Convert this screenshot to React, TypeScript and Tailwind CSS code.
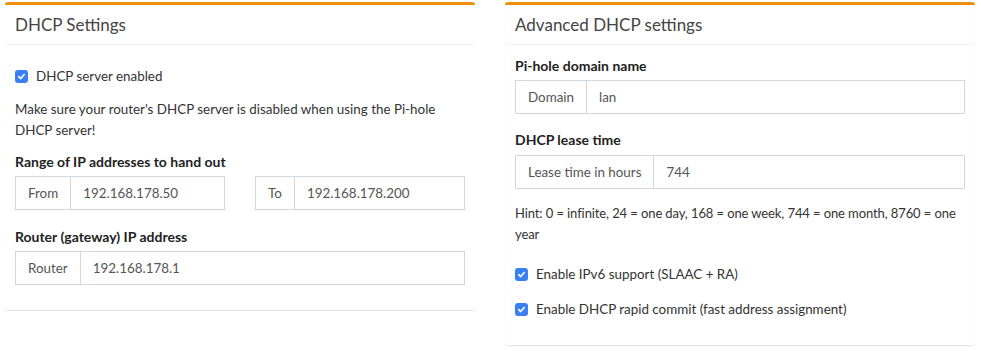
import React from "react";

const font = { fontFamily: '"Lato", "Noto Sans", sans-serif' };

function Check({ label }: { label: string }) {
  return (
    <div className="flex items-center h-[20px] gap-[8px]">
      <span className="w-[13px] h-[13px] rounded-[3px] bg-[#3a7ff6] flex items-center justify-center">
        <svg width="9" height="9" viewBox="0 0 10 10" fill="none">
          <path d="M2 5.2 L4.1 7.3 L8 2.8" stroke="white" strokeWidth="1.8" strokeLinecap="round" strokeLinejoin="round" />
        </svg>
      </span>
      <span className="text-[13.4px] text-[#333]">{label}</span>
    </div>
  );
}

function InputGroup({ addon, value, className = "" }: { addon: string; value: string; className?: string }) {
  return (
    <div className={`flex h-[34px] border border-[#d2d6de] text-[13.4px] text-[#555] ${className}`}>
      <div className="px-[12px] flex items-center border-r border-[#d2d6de] whitespace-nowrap">{addon}</div>
      <div className="px-[12px] flex items-center flex-1">{value}</div>
    </div>
  );
}

function Box({ title, children }: { title: string; children: React.ReactNode }) {
  return (
    <div className="w-[470px] bg-white rounded-[3px] border-t-[3px] border-[#f0900e] shadow-[0_1px_1px_rgba(0,0,0,0.12)] self-start">
      <div className="h-[40px] flex items-center px-[10px] border-b border-[#f2f2f2] text-[17px] text-[#444]">
        {title}
      </div>
      <div className="px-[10px]">{children}</div>
    </div>
  );
}

export default function App() {
  return (
    <div className="w-[981px] h-[351px] bg-white pl-[5px] pt-[2px] flex gap-[30px] leading-[21px]" style={font}>
      <Box title="DHCP Settings">
        <div className="pt-[21px] pb-[25px]">
          <Check label="DHCP server enabled" />
          <p className="mt-[13px] text-[13.4px] text-[#333] pr-[16px]">
            Make sure your router's DHCP server is disabled when using the Pi-hole DHCP server!
          </p>
          <div className="mt-[10px] text-[14px] font-bold text-[#222]">Range of IP addresses to hand out</div>
          <div className="mt-[4px] flex gap-[30px]">
            <InputGroup addon="From" value="192.168.178.50" className="w-[210px]" />
            <InputGroup addon="To" value="192.168.178.200" className="w-[210px]" />
          </div>
          <div className="mt-[16px] text-[14px] font-bold text-[#222]">Router (gateway) IP address</div>
          <InputGroup addon="Router" value="192.168.178.1" className="mt-[4px] w-[450px]" />
        </div>
      </Box>
      <Box title="Advanced DHCP settings">
        <div className="pt-[10px] pb-[26px]">
          <div className="text-[14px] font-bold text-[#222]">Pi-hole domain name</div>
          <InputGroup addon="Domain" value="lan" className="mt-[4px] w-[450px]" />
          <div className="mt-[15px] text-[14px] font-bold text-[#222]">DHCP lease time</div>
          <InputGroup addon="Lease time in hours" value="744" className="mt-[5px] w-[450px]" />
          <p className="mt-[14px] text-[13px] tracking-[-0.1px] text-[#333]">
            Hint: 0 = infinite, 24 = one day, 168 = one week, 744 = one month, 8760 = one year
          </p>
          <div className="mt-[19px] flex flex-col gap-[15px]">
            <Check label="Enable IPv6 support (SLAAC + RA)" />
            <Check label="Enable DHCP rapid commit (fast address assignment)" />
          </div>
        </div>
      </Box>
    </div>
  );
}
